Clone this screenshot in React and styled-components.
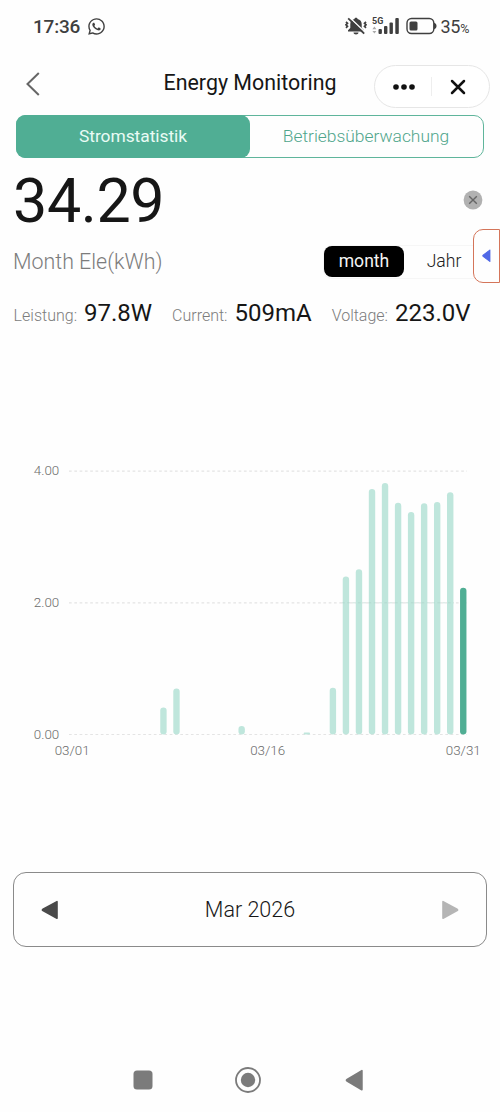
import React from 'react'
import styled, { createGlobalStyle } from 'styled-components';
import { FaWhatsapp } from 'react-icons/fa';

const GlobalStyle = createGlobalStyle`
  * {
    box-sizing: border-box;
  }
  body {
    margin: 0;
    background: #fefefe;
    font-family: Roboto, "Liberation Sans", sans-serif;
    color: #161616;
  }
  svg {
    display: block;
    flex-shrink: 0;
  }
`

const Screen = styled.div`
  position: relative;
  display: flex;
  flex-direction: column;
  width: 500px;
  height: 1112px;
  overflow: hidden;
  background: #fefefe;
`

const StatusBar = styled.div`
  display: flex;
  align-items: center;
  justify-content: space-between;
  height: 54px;
  padding: 0 31px 0 33px;
  color: #3f3f3f;
`

const Clock = styled.div`
  display: flex;
  align-items: center;
  gap: 7px;
  font-size: 19px;
  font-weight: 500;
  line-height: 22px;
  letter-spacing: -0.2px;
  svg {
    margin-top: -2px;
  }
`

const Indicators = styled.div`
  display: flex;
  align-items: center;
  padding-bottom: 2px;
`

const SignalSlot = styled.div`
  padding: 0 6px 0 5px;
`

const Battery = styled.span`
  margin-left: 4px;
  padding-top: 3px;
  font-size: 18px;
  line-height: 22px;
  letter-spacing: -0.3px;
  small {
    font-size: 12.5px;
  }
`

const Header = styled.header`
  display: grid;
  grid-template-columns: 110px 1fr 126px;
  height: 61px;
`

const BackButton = styled.button`
  display: flex;
  align-items: flex-start;
  padding: 17px 0 0 25px;
  border: 0;
  background: none;
`

const Title = styled.h1`
  width: 206px;
  margin: 0 0 0 16px;
  padding-top: 16px;
  justify-self: center;
  font-size: 21.4px;
  font-weight: 400;
  line-height: 26px;
  text-align: center;
  white-space: nowrap;
`

const Capsule = styled.div`
  display: flex;
  align-items: center;
  width: 116px;
  height: 43px;
  margin-top: 11px;
  padding: 0 4px 0 2px;
  border: 1px solid #e6e6e6;
  border-radius: 22px;
  background: #fff;
`

const CapsuleButton = styled.button`
  display: flex;
  flex: 1;
  align-items: center;
  justify-content: center;
  height: 19px;
  padding: 0;
  border: 0;
  background: none;
  & + & {
    border-left: 1px solid #eee;
  }
`

const Tabs = styled.div`
  display: flex;
  height: 43px;
  margin: 0 16px;
  border: 1.5px solid #5fb59b;
  border-radius: 10px;
`

const Tab = styled.button`
  flex: 1;
  margin: -1px 0 -1px -1px;
  padding: 0 0 2px;
  border: 0;
  border-radius: 9px;
  font-family: inherit;
  font-size: ${p => (p.$active ? 17.4 : 17.4)}px;
  font-weight: ${p => (p.$active ? 400 : 300)};
  letter-spacing: ${p => (p.$active ? -0.05 : 0)}px;
  color: ${p => (p.$active ? '#e9fbf5' : '#4fa58b')};
  background: ${p => (p.$active ? '#50ae94' : 'transparent')};
`

const TotalRow = styled.div`
  display: flex;
  align-items: center;
  justify-content: space-between;
  height: 84px;
  padding: 0 17px 0 13px;
`

const Total = styled.div`
  padding-top: 2px;
  font-size: 61px;
  line-height: 72px;
  letter-spacing: -0.4px;
`

const UnitRow = styled.div`
  display: flex;
  align-items: center;
  justify-content: space-between;
  height: 39px;
  padding-left: 13px;
`

const Unit = styled.div`
  font-size: 21.4px;
  font-weight: 300;
  line-height: 28px;
  color: #7c7c7c;
`

const Period = styled.div`
  display: flex;
  align-items: center;
  width: 177px;
  height: 34px;
  border: 1px solid #f6f6f6;
  border-right: 0;
  border-radius: 9px;
`

const PeriodOption = styled.button`
  width: 80px;
  height: 31px;
  padding: 0 0 2px;
  border: 0;
  border-radius: 8px;
  font-family: inherit;
  font-size: 17.6px;
  font-weight: ${p => (p.$active ? 400 : 300)};
  color: ${p => (p.$active ? '#f4f4f4' : '#202020')};
  background: ${p => (p.$active ? '#000' : 'transparent')};
`

const SideHandle = styled.button`
  position: absolute;
  top: 229px;
  right: 0;
  display: flex;
  align-items: center;
  width: 27px;
  height: 54px;
  padding: 0 0 0 8px;
  border: 1.3px solid #d4755a;
  border-radius: 10px 0 0 10px;
  background: #fefefe;
`

const Readings = styled.div`
  display: flex;
  align-items: baseline;
  gap: 20px;
  height: 60px;
  padding: 18px 0 0 13.6px;
  white-space: nowrap;
`

const Reading = styled.div`
  font-size: 16px;
  font-weight: 300;
  line-height: 28px;
  color: #7c7c7c;
  b {
    margin-left: 7px;
    font-size: 24px;
    font-weight: 400;
    color: #161616;
  }
`

const Chart = styled.svg`
  margin-top: 114px;
  text {
    font-size: 13.4px;
    font-weight: 300;
    fill: #6b6b6b;
  }
`

const MonthPicker = styled.div`
  display: flex;
  align-items: center;
  justify-content: space-between;
  height: 75px;
  margin: 107px 13px 0 13px;
  padding: 0 27px 0 27px;
  border: 1.4px solid #8a8a8a;
  border-radius: 13px;
  font-size: 21.5px;
  font-weight: 300;
`

const NavBar = styled.nav`
  display: flex;
  align-items: center;
  height: 64px;
  margin-top: auto;
  padding-left: 132px;
`

const NavButton = styled.button`
  display: flex;
  justify-content: center;
  width: 106px;
  padding: 0;
  border: 0;
  background: none;
  &:first-child {
    width: 21px;
    margin-right: 42px;
  }
`

const readings = [
  { label: 'Leistung:', value: '97.8W' },
  { label: 'Current:', value: '509mA' },
  { label: 'Voltage:', value: '223.0V' },
]

// kWh per day, days without an entry are zero
const usage = {
  8: 0.41, 9: 0.7, 14: 0.13, 19: 0.03, 21: 0.71, 22: 2.4, 23: 2.51, 24: 3.73,
  25: 3.82, 26: 3.52, 27: 3.38, 28: 3.51, 29: 3.53, 30: 3.68, 31: 2.23,
}

const BASE = 279.5
const UNIT = 65.85
const dayX = day => 72.2 + (day - 1) * 13.035

function UsageChart() {
  return (
    <Chart width="500" height="310" viewBox="0 0 500 310">
      {[4, 2, 0].map(v => (
        <g key={v}>
          <text x="59.3" y={BASE - v * UNIT + 4} textAnchor="end">{v.toFixed(2)}</text>
          <line x1="69" x2="467" y1={BASE - v * UNIT} y2={BASE - v * UNIT} stroke="#e4e4e4" strokeWidth="1.2" strokeDasharray="2.7 2.6" />
        </g>
      ))}
      {Object.entries(usage).map(([day, kwh]) => {
        const h = kwh * UNIT
        return (
          <rect
            key={day}
            x={dayX(day) - 3.2}
            y={BASE - h}
            width="6.4"
            height={h}
            rx={Math.min(3.2, h / 2)}
            fill={day === '31' ? '#50ae94' : '#bfe6dc'}
          />
        )
      })}
      <line x1="342" x2="454" y1={BASE - 2 * UNIT} y2={BASE - 2 * UNIT} stroke="#a9cfc5" strokeWidth="1" strokeDasharray="2.7 2.6" opacity="0.5" />
      {['03/01', '03/16', '03/31'].map((label, i) => (
        <text key={label} x={dayX(1 + i * 15)} y="300.3" textAnchor="middle">{label}</text>
      ))}
    </Chart>
  )
}

function MutedBell() {
  return (
    <svg width="22" height="20" viewBox="0 0 22 20">
      <path d="M11 1.800c-1 0-1.500.4-1.500 1.100C6.700 3.600 5.300 5.500 5.300 7.900v4l-2.300 2.300v1.300h16v-1.300l-2.300-2.300v-4c0-2.400-1.400-4.300-4.200-5 0-.7-.5-1.100-1.500-1.100z" fill="#3f3f3f" />
      <path d="M8.500 16.500h5c0 1.200-1.200 1.900-2.500 1.900s-2.500-.7-2.500-1.900z" fill="#3f3f3f" />
      <path d="M4.600 1.500l16 15.200" stroke="#fefefe" strokeWidth="1.500" />
      <path d="M3.200 2.300L19.200 17.600" stroke="#3f3f3f" strokeWidth="1.800" />
      <path d="M1 5.800l1.500 1.500L1 8.800l1.500 1.500L1 11.800M21 5.800l-1.500 1.500L21 8.800l-1.500 1.500 1.500 1.500" fill="none" stroke="#3f3f3f" strokeWidth="1.700" />
    </svg>
  )
}

function Signal() {
  return (
    <svg width="28" height="20" viewBox="0 0 28 20">
      <text x="0" y="7.700" fontSize="9" fontWeight="700" fill="#3f3f3f">5G</text>
      <path d="M.4 13.200l2-2.600 2 2.600zM.4 15l2 2.600 2-2.600z" fill="#aaa" />
      <g fill="#3f3f3f">
        <rect x="6.500" y="13" width="3.400" height="5" rx="1" />
        <rect x="12" y="10" width="3.400" height="8" rx="1" />
        <rect x="17.500" y="6.500" width="3.400" height="11.500" rx="1" />
        <rect x="23.300" y="2" width="3.500" height="16" rx="1" />
      </g>
    </svg>
  )
}

function BatteryIcon() {
  return (
    <svg width="31" height="18" viewBox="0 0 31 18">
      <rect x="1" y="1.500" width="26.800" height="15" rx="4.500" fill="none" stroke="#3f3f3f" strokeWidth="1.400" />
      <rect x="3.500" y="4.500" width="8" height="9" rx="1.500" fill="#3f3f3f" />
      <path d="M28 5.700c1.800.5 2.500 1.700 2.500 3.300s-.7 2.800-2.500 3.300z" fill="#3f3f3f" />
    </svg>
  )
}

function Arrow({ size = 18, color, flip, ratio = 1.1 }) {
  return (
    <svg width={size} height={size * ratio} viewBox="0 0 18 20" preserveAspectRatio="none">
      <path
        d="M2 9.300L16 1.600v16.800L2 10.700Q.8 10 2 9.300z"
        transform={flip ? 'rotate(180 9 10)' : undefined}
        fill={color}
        stroke={color}
        strokeWidth="1.600"
        strokeLinejoin="round"
      />
    </svg>
  )
}

function App() {
  return (
    <Screen>
      <GlobalStyle />
      <StatusBar>
        <Clock>17:36 <FaWhatsapp size={19} /></Clock>
        <Indicators>
          <MutedBell />
          <SignalSlot><Signal /></SignalSlot>
          <BatteryIcon />
          <Battery>35<small>%</small></Battery>
        </Indicators>
      </StatusBar>

      <Header>
        <BackButton aria-label="Back">
          <svg width="16" height="26" viewBox="0 0 16 26">
            <path d="M13.800 2L2.500 13l11.300 11" fill="none" stroke="#666" strokeWidth="2" />
          </svg>
        </BackButton>
        <Title>Energy Monitoring</Title>
        <Capsule>
          <CapsuleButton aria-label="More">
            <svg width="24" height="8" viewBox="0 0 24 8" fill="#111">
              <circle cx="4" cy="4" r="2.800" />
              <circle cx="12" cy="4" r="2.800" />
              <circle cx="20" cy="4" r="2.800" />
            </svg>
          </CapsuleButton>
          <CapsuleButton aria-label="Close">
            <svg width="16" height="16" viewBox="0 0 16 16">
              <path d="M2 2l12 12M14 2L2 14" stroke="#111" strokeWidth="2.500" strokeLinecap="round" />
            </svg>
          </CapsuleButton>
        </Capsule>
      </Header>

      <Tabs>
        <Tab $active>Stromstatistik</Tab>
        <Tab>Betriebsüberwachung</Tab>
      </Tabs>

      <TotalRow>
        <Total>34.29</Total>
        <svg width="20" height="20" viewBox="0 0 20 20">
          <circle cx="10" cy="10" r="9.400" fill="#b1b1b1" />
          <path d="M6.200 6.200l7.600 7.600M13.800 6.200l-7.600 7.600" stroke="#666" strokeWidth="1.400" />
        </svg>
      </TotalRow>

      <UnitRow>
        <Unit>Month Ele(kWh)</Unit>
        <Period>
          <PeriodOption $active>month</PeriodOption>
          <PeriodOption>Jahr</PeriodOption>
        </Period>
      </UnitRow>

      <Readings>
        {readings.map(r => (
          <Reading key={r.label}>{r.label}<b>{r.value}</b></Reading>
        ))}
      </Readings>

      <UsageChart />

      <MonthPicker>
        <Arrow color="#4a4a4a" />
        <span>Mar 2026</span>
        <Arrow color="#b5b5b5" flip />
      </MonthPicker>

      <NavBar>
        <NavButton aria-label="Recents">
          <svg width="20" height="20"><rect x="0.500" y="0.500" width="19" height="19" rx="3.500" fill="#7b7b7b" /></svg>
        </NavButton>
        <NavButton aria-label="Home">
          <svg width="28" height="28" viewBox="0 0 28 28">
            <circle cx="14" cy="14" r="12" fill="none" stroke="#7b7b7b" strokeWidth="1.800" />
            <circle cx="14" cy="14" r="7.200" fill="#7b7b7b" />
          </svg>
        </NavButton>
        <NavButton aria-label="Back">
          <Arrow size={19} color="#7b7b7b" ratio={1.18} />
        </NavButton>
      </NavBar>

      <SideHandle aria-label="Open panel">
        <Arrow size={9} color="#5068e6" ratio={1.5} />
      </SideHandle>
    </Screen>
  )
}

export default App
